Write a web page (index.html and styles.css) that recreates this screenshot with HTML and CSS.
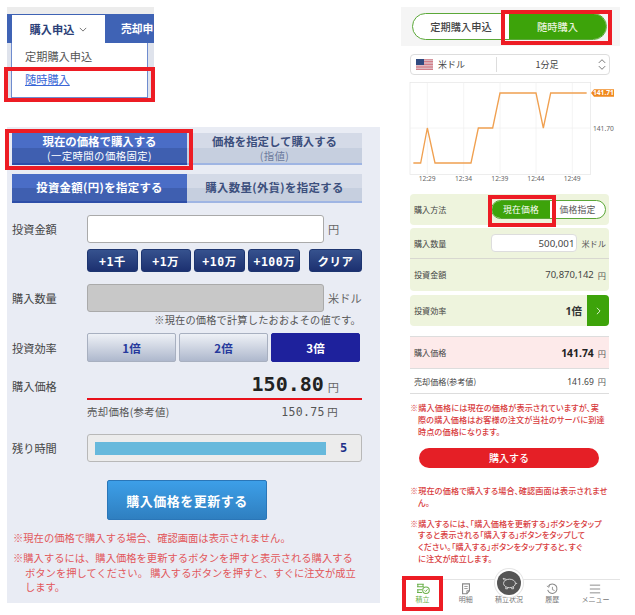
FILE: index.html
```html
<!DOCTYPE html>
<html lang="ja">
<head>
<meta charset="utf-8">
<title>購入申込</title>
<link rel="stylesheet" href="styles.css">
</head>
<body>
<section class="shot menu-shot">
  <div class="menu-strip"></div>
  <div class="menu-tabs">
    <div class="menu-tab-on">購入申込<svg class="chev" viewBox="0 0 10 6"><path d="M1 1l4 4 4-4" fill="none" stroke="#555" stroke-width="1"/></svg></div>
    <div class="menu-tab-off">売却申</div>
  </div>
  <div class="menu-body">
    <div class="menu-drop">
      <div class="menu-item">定期購入申込</div>
      <div class="menu-item"><a class="menu-link">随時購入</a></div>
    </div>
  </div>
</section>
<div class="mark mark-a"></div>

<section class="shot pc-shot">
  <div class="tabs tabs-first">
    <div class="tab tab-on"><b>現在の価格で購入する</b><small>(一定時間の価格固定)</small></div>
    <div class="tab tab-off"><b>価格を指定して購入する</b><small>(指値)</small></div>
  </div>
  <div class="tabs tabs-second">
    <div class="tab tab-on"><b>投資金額(円)を指定する</b></div>
    <div class="tab tab-off"><b>購入数量(外貨)を指定する</b></div>
  </div>
  <div class="row row-amount">
    <span class="lab">投資金額</span><div class="field"></div><span class="unit">円</span>
  </div>
  <div class="quick">
    <button class="qb qb-a">+1千</button><button class="qb qb-b">+1万</button><button class="qb qb-c">+10万</button><button class="qb qb-c">+100万</button><button class="qb qb-clear">クリア</button>
  </div>
  <div class="row row-qty">
    <span class="lab">購入数量</span><div class="field field-off"></div><span class="unit unit-tight">米ドル</span>
  </div>
  <p class="hint">※現在の価格で計算したおおよその値です。</p>
  <div class="row row-eff">
    <span class="lab">投資効率</span>
    <div class="effs"><button class="eff">1倍</button><button class="eff">2倍</button><button class="eff eff-on">3倍</button></div>
  </div>
  <div class="row row-price">
    <span class="lab">購入価格</span>
    <div class="price"><strong>150.80</strong><span class="unit">円</span></div>
  </div>
  <div class="row-sell"><span>売却価格(参考値)</span><span class="sell-val"><i>150.75</i> 円</span></div>
  <div class="row row-left">
    <span class="lab">残り時間</span>
    <div class="timer"><div class="timer-bar"></div><b>5</b></div>
  </div>
  <button class="update">購入価格を更新する</button>
  <p class="warn warn-1">※現在の価格で購入する場合、確認画面は表示されません。</p>
  <p class="warn warn-2">※購入するには、購入価格を更新するボタンを押すと表示される購入するボタンを押してください。 購入するボタンを押すと、すぐに注文が成立します。</p>
</section>
<div class="mark mark-b"></div>

<section class="shot sp-shot">
  <div class="sp-top">
    <div class="pill"><span class="pill-off">定期購入申込</span><span class="pill-on">随時購入</span></div>
  </div>
  <div class="selector">
    <svg class="flag" viewBox="0 0 17 11"><rect width="17" height="11" fill="#e8e8ee"/><path d="M0 .8h17M0 2.400h17M0 4h17M0 5.600h17M0 7.200h17M0 8.800h17M0 10.400h17" stroke="#c8535f" stroke-width=".8"/><rect width="8" height="6" fill="#2f4a80"/></svg>
    <span class="sel-cur">米ドル</span>
    <span class="sel-term">1分足</span>
    <svg class="updown" viewBox="0 0 10 16"><path d="M1 6l4-4 4 4M1 10l4 4 4-4" fill="none" stroke="#555" stroke-width="1"/></svg>
  </div>
  <svg class="chart" viewBox="0 0 660 300">
    <rect x="30" y="1" width="542" height="276" fill="#fff" stroke="#e4e4e4" stroke-width="2"/>
    <path d="M82 1v276M191 1v276M300 1v276M408 1v276M517 1v276M30 138h542" stroke="#eee" stroke-width="2" fill="none"/>
    <polyline points="40,243 62,243 82,138 105,243 213,243 235,138 278,138 300,33 408,33 430,138 452,33 560,33" fill="none" stroke="#f0a050" stroke-width="4"/>
    <path d="M582 22h60v22h-60l-9-11z" fill="#f08a20"/>
    <text class="tag" x="579" y="40">141.71</text>
    <text class="axis" x="579" y="146">141.70</text>
    <text class="axis" x="56" y="298">12:29</text>
    <text class="axis" x="165" y="298">12:34</text>
    <text class="axis" x="274" y="298">12:39</text>
    <text class="axis" x="382" y="298">12:44</text>
    <text class="axis" x="491" y="298">12:49</text>
  </svg>
  <div class="block block-method">
    <span>購入方法</span>
    <div class="toggle"><span class="toggle-on">現在価格</span><span class="toggle-off">価格指定</span></div>
  </div>
  <div class="block block-two">
    <div class="line line-qty"><span>購入数量</span><div class="sp-val"><span class="sp-input">500,001</span><em>米ドル</em></div></div>
    <div class="line line-amt"><span>投資金額</span><div class="sp-val"><span class="sp-num">70,870,142</span><em>円</em></div></div>
  </div>
  <div class="block block-eff">
    <span>投資効率</span>
    <b class="eff-val">1倍</b>
    <span class="eff-go"><svg viewBox="0 0 6 10"><path d="M1 1l4 4-4 4" fill="none" stroke="#fff" stroke-width="1"/></svg></span>
  </div>
  <div class="sp-price"><span>購入価格</span><div class="sp-val"><b class="sp-big">141.74</b><em>円</em></div></div>
  <div class="sp-sell"><span>売却価格(参考値)</span><div class="sp-val"><span class="sp-small">141.69</span><em>円</em></div></div>
  <p class="sp-note sp-note-1">※購入価格には現在の価格が表示されていますが、実<br>際の購入価格はお客様の注文が当社のサーバに到達<br>時点の価格になります。</p>
  <button class="buy">購入する</button>
  <p class="sp-note sp-note-2">※現在の価格で購入する場合、確認画面は表示されませ<br>ん。</p>
  <p class="sp-note sp-note-3">※購入するには、「購入価格を更新する」ボタンをタップ<br>すると表示される「購入する」ボタンをタップして<br>ください。「購入する」ボタンをタップすると、すぐ<br>に注文が成立します。</p>
  <nav class="foot">
    <div class="fi fi-on">
      <svg viewBox="0 0 16 14"><path d="M1 1.500h8M1 4.500h8M2 1.500v3M8 1.500v3M1 8h6M1 11h6M2 8v3" fill="none" stroke="#6ab04a" stroke-width="1.200"/><circle cx="11.500" cy="8.500" r="3.800" fill="none" stroke="#6ab04a" stroke-width="1.200"/><path d="M9.800 8.500l1.300 1.400 2.200-2.600" fill="none" stroke="#6ab04a" stroke-width="1.100"/></svg>
      <span>積立</span>
    </div>
    <div class="fi">
      <svg viewBox="0 0 14 14"><path d="M3 1h8v8l-3 3.500H3z" fill="none" stroke="#888" stroke-width="1.300"/><path d="M5 4h4M5 6.500h4M8 12.500V9h3" fill="none" stroke="#888" stroke-width="1"/></svg>
      <span>明細</span>
    </div>
    <div class="fi fi-mid">
      <div class="fi-circle"><svg viewBox="0 0 20 16"><ellipse cx="10" cy="8.500" rx="7" ry="5" fill="none" stroke="#d8d8d8" stroke-width="1.100"/><path d="M4 5L2.500 2.500 6.500 3.800M5.500 13v1.800h2.300V13.300M12.500 13.300v1.500h2.300V12.500M17 8.500h2" fill="none" stroke="#d8d8d8" stroke-width="1.100"/></svg></div>
      <span>積立状況</span>
    </div>
    <div class="fi">
      <svg viewBox="0 0 14 14"><path d="M3 3.200A5.500 5.500 0 1 1 2 8" fill="none" stroke="#888" stroke-width="1.200"/><path d="M1 3.500l2.500 1.500L4 2M7.500 4.500v3.300l2.500 1" fill="none" stroke="#888" stroke-width="1"/></svg>
      <span>履歴</span>
    </div>
    <div class="fi">
      <svg viewBox="0 0 14 14"><path d="M1 2.500h12M1 7h12M1 11.500h12" stroke="#888" stroke-width="1.100"/></svg>
      <span>メニュー</span>
    </div>
  </nav>
</section>
<div class="mark mark-c"></div>
<div class="mark mark-d"></div>
<div class="mark mark-e"></div>
</body>
</html>
```
FILE: styles.css
```css
* { box-sizing: border-box; }
html, body { margin: 0; padding: 0; background: #fff; }
body {
  position: relative;
  width: 635px;
  height: 615px;
  overflow: hidden;
  font-family: "Noto Sans CJK JP", "Noto Sans", sans-serif;
  color: #444;
}
button { font-family: inherit; padding: 0; cursor: pointer; }
p { margin: 0; }
.shot { position: absolute; }
.mark { position: absolute; border: 4px solid #ed1c24; }
.mark-a { left: 4px; top: 67px; width: 151px; height: 35px; }
.mark-b { left: 5px; top: 129px; width: 188px; height: 41px; }
.mark-c { left: 501px; top: 10px; width: 111px; height: 35px; }
.mark-d { left: 488px; top: 195px; width: 68px; height: 32px; }
.mark-e { left: 402px; top: 576px; width: 41px; height: 35px; }

/* dropdown capture */
.menu-shot { left: 7px; top: 7px; width: 147px; height: 92px; background: #dfe3ec; }
.menu-strip { height: 7px; background: #ececec; }
.menu-tabs { display: flex; height: 29px; padding-left: 4px; background: #3f63b5; }
.menu-tab-on {
  width: 94px; display: flex; align-items: center; justify-content: center; gap: 5px;
  background: #fff; color: #2c3f78; font-size: 11.200px; font-weight: 700;
  border-top: 1px solid #3f63b5;
  border-left: 1px solid #3f63b5;
}
.chev { width: 8px; height: 5px; }
.menu-tab-off { flex: 1; white-space: nowrap; padding: 6px 0 0 16px; color: #fff; font-size: 10.800px; font-weight: 700; }
.menu-body { padding-left: 4px; height: 56px; }
.menu-drop {
  width: 137px; height: 55px; padding: 2px 0 0 13px; background: #fff;
  border: 1px solid #6f8ccf; border-top: 0;
}
.menu-item { font-size: 11.200px; line-height: 23px; color: #555; }
.menu-link { color: #3a66d6; text-decoration: underline; }

/* pc capture */
.pc-shot { left: 7px; top: 127px; width: 373px; height: 476px; background: #e9ecf4; padding: 6px 18px 0 5px; }
.tabs { display: flex; }
.tabs-first { height: 32px; }
.tabs-second { height: 29px; margin-top: 9px; }
.tabs-second b { letter-spacing: .35px; }
.tab { flex: 1; display: flex; flex-direction: column; align-items: center; justify-content: center; text-align: center; }
.tab b { font-size: 11.400px; line-height: 15px; }
.tab small { font-size: 10.400px; line-height: 13px; letter-spacing: .4px; font-weight: 400; }
.tab-on { background: linear-gradient(#4a6dc6 50%, #3f5fb0 50%); color: #fff; border-bottom: 2px solid #2d4ea8; }
.tab-off { background: linear-gradient(#d4dae7 50%, #c6cfdf 50%); color: #3c4f7d; border-bottom: 2px solid #9fb5e3; }
.tab-off small { color: #6c7a9c; }
.row { display: flex; align-items: center; }
.lab { width: 75px; flex: none; font-size: 11.200px; color: #444; }
.unit { font-size: 11.200px; color: #666; margin-left: 4px; white-space: nowrap; }
.row-amount { margin-top: 12px; height: 28px; }
.field { width: 237px; height: 100%; background: #fff; border: 1px solid #aaa; border-radius: 3px; }
.field-off { background: #c8c8c8; }
.quick { display: flex; margin: 6px 0 0 75px; height: 23px; }
.qb {
  height: 23px; border: 1px solid #1d3570; border-radius: 3px; color: #fff;
  background: linear-gradient(#36528e, #1c3070);
  font-size: 11.500px; font-weight: 700; letter-spacing: .5px;
  font-family: "DejaVu Sans Mono", "Noto Sans CJK JP", monospace;
}
.qb-a { width: 51px; margin-right: 3px; }
.qb-b { width: 50px; margin-right: 3px; }
.qb-c { width: 52px; margin-right: 3px; }
.qb-clear { width: 53px; margin-left: 6px; font-family: "Noto Sans CJK JP", sans-serif; }
.row-qty { margin-top: 12px; height: 28px; }
.hint { margin-top: 1px; height: 14px; padding-right: 1px; text-align: right; font-size: 10.200px; line-height: 14px; letter-spacing: .2px; color: #555; }
.row-eff { margin-top: 6px; height: 29px; }
.effs { display: flex; gap: 3px; }
.eff {
  width: 89px; height: 29px; border: 1px solid #a8b0c0; border-radius: 2px;
  background: linear-gradient(#eef1f6, #aeb8cd); color: #26399c; font-size: 11.500px; font-weight: 700;
}
.eff-on { background: #1e219c; border-color: #1e219c; color: #fff; }
.row-price { margin-top: 9px; height: 36px; align-items: flex-start; }
.row-price .lab { margin-top: 7px; }
.price { width: 275px; height: 29px; display: flex; justify-content: flex-end; align-items: center; padding-right: 23px; border-bottom: 2px solid #e8101a; }
.price strong { font-family: "DejaVu Sans Mono", monospace; font-size: 20px; line-height: 27px; color: #222; }
.price .unit { margin-top: 4px; }
.row-sell { display: flex; margin: -6px 0 0 75px; width: 251px; height: 20px; justify-content: space-between; align-items: center; font-size: 10.400px; letter-spacing: .3px; color: #555; }
.sell-val i { font-style: normal; font-family: "DejaVu Sans Mono", monospace; font-size: 11.500px; }
.row-left { margin-top: 13px; height: 28px; }
.timer { display: flex; align-items: center; width: 275px; height: 28px; padding-left: 7px; background: #ececec; border: 1px solid #b8b8b8; border-radius: 3px; }
.timer-bar { width: 231px; height: 13px; background: #67b9dc; }
.timer b { flex: 1; text-align: center; color: #1c2f88; font-size: 12px; font-family: "DejaVu Sans Mono", monospace; }
.update {
  display: block; width: 160px; height: 40px; margin: 18px 0 0 95px;
  border: 1px solid #2a76b8; border-radius: 2px; color: #fff; font-size: 13px; font-weight: 700; letter-spacing: .5px;
  background: linear-gradient(#3d9fe8, #2f7fc0);
}
.warn { font-size: 10.300px; color: #e2575b; margin-left: 1px; width: 348px; padding-left: 12px; text-indent: -12px; }
.warn-1 { margin-top: 10px; line-height: 16px; }
.warn-2 { margin-top: 5px; line-height: 14.500px; }

/* phone capture */
.sp-shot { left: 401px; top: 7px; width: 219px; height: 608px; }
.sp-top { height: 39px; padding: 6px 14px 0 11px; background: #f5f5f5; }
.pill { display: flex; height: 27px; width: 195px; border: 1.500px solid #5ba838; border-radius: 14px; background: #fff; overflow: hidden; }
.pill span { display: flex; align-items: center; justify-content: center; font-size: 10.200px; letter-spacing: .1px; }
.pill-off { width: 96px; color: #444; font-weight: 500; }
.pill-on { flex: 1; background: #3da30a; color: #e8f2dc; font-weight: 500; }
.selector { display: flex; align-items: center; margin: 8px 0 0 9px; width: 200px; height: 21px; border: 1px solid #ddd; border-radius: 4px; font-size: 9px; color: #444; }
.flag { width: 17px; height: 11px; margin-left: 5px; }
.sel-cur { width: 64px; padding-left: 5px; height: 15px; line-height: 15px; border-right: 1px solid #ddd; white-space: nowrap; }
.sel-term { width: 100px; text-align: center; font-family: "Noto Sans CJK JP", sans-serif; }
.updown { width: 8px; height: 13px; margin-left: 1px; }
.chart { display: block; width: 220px; height: 100px; margin-top: 7px; margin-left: -1px; }
.chart text { font-family: "Noto Sans", sans-serif; font-size: 20px; fill: #666; }
.chart .tag { fill: #fff; font-weight: 700; }
.block { margin-left: 9px; width: 199px; background: #eef4dd; border-radius: 4px; font-size: 8.100px; color: #444; display: flex; align-items: center; }
.block-method { height: 31px; margin-top: 12px; padding-left: 4px; justify-content: space-between; padding-right: 3px; }
.toggle { display: flex; width: 115px; height: 19px; border: 1px solid #5ba838; border-radius: 10px; background: #fff; overflow: hidden; }
.toggle span { display: flex; align-items: center; justify-content: center; font-size: 8.800px; letter-spacing: .2px; }
.toggle-on { width: 58px; background: #3da30a; color: #fff; }
.toggle-off { flex: 1; color: #555; }
.block-two { display: block; height: 63px; margin-top: 3px; }
.line { display: flex; align-items: center; justify-content: space-between; padding: 0 3px 0 4px; height: 31px; }
.line-qty { border-bottom: 1px solid #d8d8d0; }
.sp-val { display: flex; align-items: center; gap: 4px; }
.sp-val em { font-style: normal; font-size: 8.200px; color: #555; }
.sp-input { display: block; width: 86px; height: 18px; line-height: 17px; padding-right: 2px; background: #fff; border: 1px solid #ddd; border-radius: 4px; text-align: right; font-family: "Noto Sans", sans-serif; font-size: 9.700px; color: #444; }
.sp-num { font-family: "Noto Sans", sans-serif; font-size: 9.500px; color: #444; }
.block-eff { height: 31px; margin-top: 4px; padding-left: 4px; }
.eff-val { margin-left: auto; margin-right: 5px; font-size: 10.500px; color: #333; font-family: "Noto Sans", "Noto Sans CJK JP", sans-serif; }
.eff-go { width: 22px; height: 31px; background: #3da30a; border-radius: 0 4px 4px 0; display: flex; align-items: center; justify-content: center; }
.eff-go svg { width: 5px; height: 8px; }
.sp-price, .sp-sell { margin-left: 9px; width: 199px; display: flex; align-items: center; justify-content: space-between; padding: 0 3px 0 4px; font-size: 8.100px; color: #444; border-bottom: 1px solid #ddd; }
.sp-price { height: 33px; margin-top: 10px; background: #fdeaea; border-top: 1px solid #ddd; }
.sp-sell { height: 25px; }
.sp-big { font-family: "Noto Sans", sans-serif; font-size: 10.400px; color: #222; }
.sp-small { font-family: "Noto Sans", sans-serif; font-size: 8.500px; color: #444; }
.sp-note { margin-left: 9px; white-space: nowrap; font-size: 8.150px; letter-spacing: .12px; line-height: 11.900px; color: #d83c40; padding-left: 8px; text-indent: -8px; font-weight: 500; font-feature-settings: "palt"; }
.sp-note-1 { margin-top: 8px; }
.buy { display: block; width: 180px; height: 20px; margin: 10px 0 0 18px; border: 0; border-radius: 10px; background: #e51f26; color: #fff; font-size: 10px; font-weight: 500; }
.sp-note-2 { margin-top: 17px; }
.sp-note-3 { margin-top: 9px; }
.foot { position: absolute; left: 0; top: 572px; width: 219px; height: 36px; padding-right: 3px; display: flex; border-top: 1px solid #e4e4e4; }
.fi { flex: 1; display: flex; flex-direction: column; align-items: center; padding-top: 3px; font-size: 7px; color: #777; position: relative; line-height: 9px; }
.fi svg { width: 14px; height: 12px; display: block; }
.fi-on { color: #6ab04a; }
.fi-mid { padding-top: 15px; }
.fi-circle { position: absolute; top: -9px; left: 50%; margin-left: -12px; width: 24px; height: 24px; border-radius: 50%; background: #555; display: flex; align-items: center; justify-content: center; box-shadow: 0 0 0 2px #fff, 0 0 0 3px #e4e4e4; }
.fi-circle svg { width: 17px; height: 14px; }
```
